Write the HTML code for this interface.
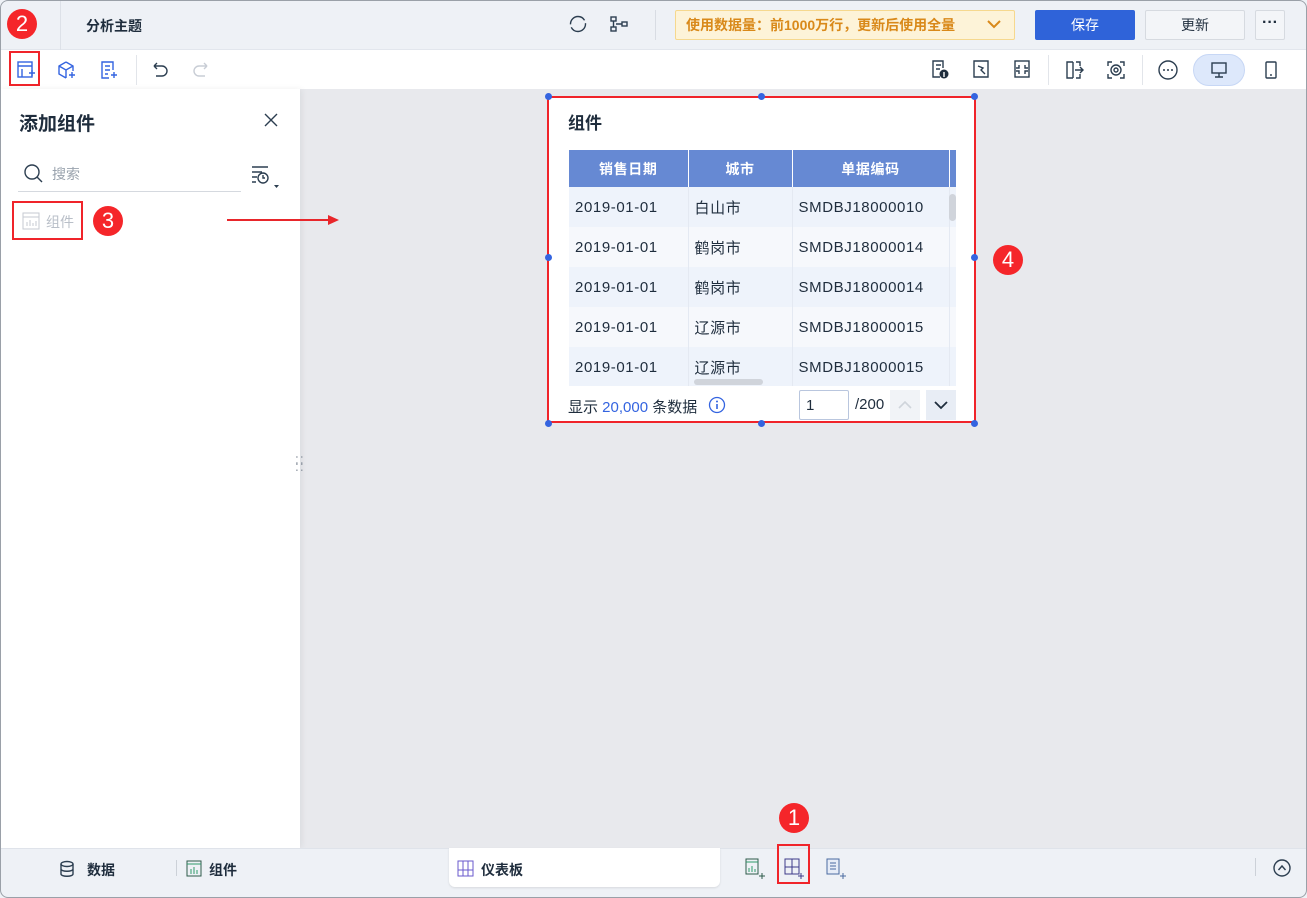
<!DOCTYPE html>
<html><head><meta charset="utf-8"><style>
*{box-sizing:border-box;margin:0;padding:0}
body{width:1307px;height:898px;overflow:hidden;font-family:"Liberation Sans","Noto Sans CJK SC",sans-serif;background:#fff;position:relative;color:#1f2d3d}
.abs{position:absolute}
.top{left:0;top:0;width:1307px;height:50px;background:#eef1f6;border-bottom:1px solid #e2e6ed}
.tb{left:0;top:50px;width:1307px;height:39px;background:#fff}
.main{left:0;top:89px;width:1307px;height:759px;background:#e8e9ed}
.left{left:0;top:89px;width:300px;height:759px;background:#fff;box-shadow:2px 0 6px rgba(0,0,0,.06)}
.bot{left:0;top:848px;width:1307px;height:50px;background:#eef1f6;border-top:1px solid #dfe3ea}
.badge{width:30px;height:30px;border-radius:50%;background:#f5262a;color:#fff;font-size:22px;text-align:center;line-height:30px}
.red{border:2px solid #f0242a}
.ic{stroke:#2c3e50;fill:none;stroke-width:1.4}
.dot{width:7px;height:7px;border-radius:50%;background:#3464e0}
table{border-collapse:collapse;font-size:15px;letter-spacing:.6px}
td,th{height:40px;border-right:1px solid #e4e9f2;padding-left:6px;text-align:left;font-weight:normal;white-space:nowrap}
th{height:37px;background:#6689d3;color:#fff;font-weight:bold;text-align:center;padding:0;border-right:1px solid #fff;font-size:14px}
tr:nth-child(even) td{background:#eef3fb}
tr:nth-child(odd) td{background:#f6f8fc}
</style></head><body>
<div class="abs top"></div>
<div class="abs" style="left:60px;top:0;width:1px;height:50px;background:#dde1e8"></div>
<div class="abs" style="left:86px;top:16px;font-size:14px;font-weight:bold">分析主题</div>
<svg class="abs" style="left:568px;top:14px" width="20" height="20"><circle cx="10" cy="10" r="7.5" class="ic" stroke-width="1.8" stroke-dasharray="20 3"/></svg>
<svg class="abs" style="left:609px;top:14px" width="20" height="20"><rect x="2" y="3" width="5" height="4" class="ic"/><rect x="2" y="13" width="5" height="4" class="ic"/><rect x="13" y="8" width="5" height="4" class="ic"/><path d="M4.5 7v6M7 10h6" class="ic"/></svg>
<div class="abs" style="left:655px;top:10px;width:1px;height:30px;background:#d8dce3"></div>
<div class="abs" style="left:675px;top:10px;width:340px;height:30px;background:#fdf3d8;border:1px solid #f6d88e;border-radius:2px;color:#d9891a;font-size:14px;font-weight:bold;line-height:28px;padding-left:10px">使用数据量：前1000万行，更新后使用全量</div>
<svg class="abs" style="left:986px;top:17px" width="16" height="14"><path d="M2 4l6 6 6-6" stroke="#d9891a" stroke-width="2" fill="none"/></svg>
<div class="abs" style="left:1035px;top:10px;width:100px;height:30px;background:#2f63d9;border-radius:2px;color:#fff;font-size:14px;text-align:center;line-height:30px">保存</div>
<div class="abs" style="left:1145px;top:10px;width:100px;height:30px;background:#f3f5f8;border:1px solid #d6dae0;border-radius:2px;font-size:14px;text-align:center;line-height:28px">更新</div>
<div class="abs" style="left:1255px;top:10px;width:30px;height:30px;background:#f3f5f8;border:1px solid #d6dae0;border-radius:2px;text-align:center;line-height:24px;font-weight:bold">···</div>

<div class="abs tb"></div>
<svg class="abs" style="left:15px;top:59px" width="22" height="22"><rect x="3" y="3" width="14" height="15" stroke="#3464e0" fill="none" stroke-width="1.4"/><path d="M3 7h14M7 10v8M14 14h6M17 11v6" stroke="#3464e0" stroke-width="1.4"/></svg>
<div class="abs red" style="left:9px;top:51px;width:31px;height:35px"></div>
<svg class="abs" style="left:57px;top:60px" width="20" height="20"><path d="M9 2l7 4v5M9 2L2 6v8l7 4M2 6l7 4 7-4M9 10v8" stroke="#3464e0" fill="none" stroke-width="1.4"/><path d="M12 15h6M15 12v6" stroke="#3464e0" stroke-width="1.4"/></svg>
<svg class="abs" style="left:99px;top:60px" width="20" height="20"><path d="M14 10V2H3v16h7M6 6h5M6 10h5M6 14h3M12 15h6M15 12v6" stroke="#3464e0" fill="none" stroke-width="1.4"/></svg>
<div class="abs" style="left:136px;top:55px;width:1px;height:30px;background:#e2e5ea"></div>
<svg class="abs" style="left:150px;top:60px" width="20" height="20"><path d="M4 6h8a5 5 0 010 10H6M4 6l3-3M4 6l3 3" class="ic"/></svg>
<svg class="abs" style="left:191px;top:60px" width="20" height="20"><path d="M16 6H8a5 5 0 000 10h6M16 6l-3-3M16 6l-3 3" stroke="#c8cdd5" fill="none" stroke-width="1.4"/></svg>
<svg class="abs" style="left:930px;top:59px" width="20" height="22"><path d="M13 9V2H3v16h7M6 6h5M6 10h4" class="ic"/><circle cx="14" cy="15" r="4.5" fill="#1f2d3d"/><path d="M14 13v5" stroke="#fff" stroke-width="1.4"/></svg>
<svg class="abs" style="left:971px;top:59px" width="20" height="22"><path d="M3 2h14v16H3z M7 7l5 2-2 2 4 4" class="ic"/></svg>
<svg class="abs" style="left:1012px;top:59px" width="20" height="22"><rect x="3" y="2" width="14" height="16" class="ic"/><path d="M7 6v3H4M13 6v3h3M7 15v-3H4M13 15v-3h3" class="ic"/></svg>
<div class="abs" style="left:1048px;top:55px;width:1px;height:30px;background:#e2e5ea"></div>
<svg class="abs" style="left:1064px;top:59px" width="22" height="22"><path d="M9 3H3v16h6M9 3v16M12 3h4v4M16 15v4h-4M11 11h8M16 8l3 3-3 3" class="ic"/></svg>
<svg class="abs" style="left:1105px;top:59px" width="22" height="22"><path d="M3 7V3h4M15 3h4v4M3 15v4h4M15 19h4v-4" class="ic"/><circle cx="11" cy="11" r="5" class="ic"/><circle cx="11" cy="11" r="2" class="ic"/></svg>
<div class="abs" style="left:1142px;top:55px;width:1px;height:30px;background:#e2e5ea"></div>
<svg class="abs" style="left:1157px;top:59px" width="22" height="22"><circle cx="11" cy="11" r="9" class="ic"/><circle cx="7" cy="11" r="1" fill="#2c3e50"/><circle cx="11" cy="11" r="1" fill="#2c3e50"/><circle cx="15" cy="11" r="1" fill="#2c3e50"/></svg>
<div class="abs" style="left:1193px;top:54px;width:52px;height:32px;border-radius:16px;background:#dde8fb;border:1px solid #c7d7f5"></div>
<svg class="abs" style="left:1209px;top:60px" width="20" height="20"><rect x="3" y="3" width="14" height="10" class="ic" stroke-width="1.6"/><path d="M10 13v4M6 17h8" class="ic" stroke-width="1.6"/></svg>
<svg class="abs" style="left:1261px;top:60px" width="20" height="20"><rect x="5" y="2" width="10" height="16" rx="1" class="ic" stroke-width="1.6"/><path d="M9 15h2" class="ic"/></svg>
<div class="abs badge" style="left:7px;top:9px">2</div>

<div class="abs main"></div>
<div class="abs left"></div>
<div class="abs" style="left:19px;top:109px;font-size:19px;font-weight:bold">添加组件</div>
<svg class="abs" style="left:262px;top:111px" width="18" height="18"><path d="M3 3l12 12M15 3L3 15" class="ic" stroke-width="1.6"/></svg>
<svg class="abs" style="left:23px;top:163px" width="22" height="22"><circle cx="9" cy="9" r="7" class="ic" stroke-width="1.7"/><path d="M14 14l5 5" class="ic" stroke-width="1.7"/></svg>
<div class="abs" style="left:52px;top:164px;font-size:14px;color:#9aa3ae">搜索</div>
<div class="abs" style="left:18px;top:191px;width:223px;height:1px;background:#d5d9df"></div>
<svg class="abs" style="left:250px;top:163px" width="32" height="30"><path d="M2 4h16M2 9h10M2 14h5M2 19h4" class="ic"/><circle cx="13" cy="15" r="5" class="ic"/><path d="M13 12v3h2" class="ic"/><path d="M24 22l2.5 3 2.5-3z" fill="#2c3e50"/></svg>
<div class="abs red" style="left:12px;top:201px;width:71px;height:39px"></div>
<svg class="abs" style="left:22px;top:212px" width="18" height="18"><rect x="1" y="1" width="16" height="16" stroke="#c5cad2" fill="none"/><path d="M1 5h16M5 14v-4M8 14v-6M11 14v-3M14 14v-5" stroke="#c5cad2"/></svg>
<div class="abs" style="left:46px;top:212px;font-size:14px;color:#b9bfc8">组件</div>
<div class="abs badge" style="left:93px;top:206px">3</div>
<div class="abs" style="left:227px;top:219px;width:105px;height:2px;background:#e8262b"></div>
<svg class="abs" style="left:328px;top:214px" width="12" height="12"><path d="M0 1l11 5-11 5z" fill="#e8262b"/></svg>
<div class="abs" style="left:295px;top:458px;font-size:12px;color:#8e96a1;line-height:6px;letter-spacing:1px">⁚⁚<br>⁚⁚</div>

<div class="abs" style="left:548px;top:96px;width:427px;height:327px;background:#fff"></div>
<div class="abs" style="left:568px;top:109px;font-size:17px;font-weight:bold">组件</div>
<div class="abs" style="left:569px;top:150px;width:387px;height:236px;overflow:hidden">
<table style="width:420px">
<tr><th style="width:119px">销售日期</th><th style="width:104px">城市</th><th style="width:157px">单据编码</th><th></th></tr>
<tr><td>2019-01-01</td><td>白山市</td><td>SMDBJ18000010</td><td></td></tr>
<tr><td>2019-01-01</td><td>鹤岗市</td><td>SMDBJ18000014</td><td></td></tr>
<tr><td>2019-01-01</td><td>鹤岗市</td><td>SMDBJ18000014</td><td></td></tr>
<tr><td>2019-01-01</td><td>辽源市</td><td>SMDBJ18000015</td><td></td></tr>
<tr><td>2019-01-01</td><td>辽源市</td><td>SMDBJ18000015</td><td></td></tr>
</table></div>
<div class="abs" style="left:949px;top:194px;width:7px;height:27px;border-radius:4px;background:#d0d4db"></div>
<div class="abs" style="left:694px;top:379px;width:69px;height:6px;border-radius:3px;background:#d0d4db"></div>
<div class="abs" style="left:568px;top:396px;font-size:15px">显示 <span style="color:#3464e0">20,000</span> 条数据</div>
<svg class="abs" style="left:708px;top:396px" width="18" height="18"><circle cx="9" cy="9" r="7.5" stroke="#3464e0" fill="none" stroke-width="1.3"/><path d="M9 8v5" stroke="#3464e0" stroke-width="1.6"/><circle cx="9" cy="5.5" r="1" fill="#3464e0"/></svg>
<div class="abs" style="left:799px;top:390px;width:50px;height:30px;border:1px solid #b9c6de;border-radius:2px;font-size:15px;padding:6px 6px">1</div>
<div class="abs" style="left:855px;top:396px;font-size:15px">/200</div>
<div class="abs" style="left:890px;top:390px;width:30px;height:30px;background:#f1f3f7"></div>
<svg class="abs" style="left:897px;top:398px" width="16" height="14"><path d="M2 10l6-6 6 6" stroke="#cfd4db" stroke-width="1.6" fill="none"/></svg>
<div class="abs" style="left:926px;top:390px;width:30px;height:30px;background:#e8edf5"></div>
<svg class="abs" style="left:933px;top:398px" width="16" height="14"><path d="M2 4l6 6 6-6" stroke="#1f2d3d" stroke-width="1.8" fill="none"/></svg>
<div class="abs red" style="left:547px;top:96px;width:429px;height:327px"></div>
<div class="abs dot" style="left:545px;top:93px"></div><div class="abs dot" style="left:758px;top:93px"></div><div class="abs dot" style="left:971px;top:93px"></div>
<div class="abs dot" style="left:545px;top:254px"></div><div class="abs dot" style="left:971px;top:254px"></div>
<div class="abs dot" style="left:545px;top:420px"></div><div class="abs dot" style="left:758px;top:420px"></div><div class="abs dot" style="left:971px;top:420px"></div>
<div class="abs badge" style="left:993px;top:245px">4</div>

<div class="abs bot"></div>
<svg class="abs" style="left:59px;top:860px" width="16" height="18"><ellipse cx="8" cy="4" rx="6" ry="2.5" class="ic"/><path d="M2 4v10c0 3 12 3 12 0V4M2 9c0 3 12 3 12 0" class="ic"/></svg>
<div class="abs" style="left:87px;top:860px;font-size:14px;font-weight:bold">数据</div>
<div class="abs" style="left:176px;top:860px;width:1px;height:16px;background:#ccd1d8"></div>
<svg class="abs" style="left:186px;top:860px" width="16" height="17"><rect x="1" y="1" width="14" height="15" stroke="#2d5a4a" fill="none"/><path d="M1 4h14M5 14v-5M8 14v-7M11 14v-4" stroke="#2d9a6a"/></svg>
<div class="abs" style="left:209px;top:860px;font-size:14px;font-weight:bold">组件</div>
<div class="abs" style="left:449px;top:848px;width:271px;height:39px;background:#fff;border-radius:0 0 6px 6px;box-shadow:0 1px 2px rgba(0,0,0,.1)"></div>
<svg class="abs" style="left:457px;top:860px" width="17" height="17"><rect x="1" y="1" width="15" height="15" stroke="#6a5acd" fill="none"/><path d="M6 1v15M11 1v15M1 10h15" stroke="#6a5acd"/></svg>
<div class="abs" style="left:481px;top:860px;font-size:14px;font-weight:bold">仪表板</div>
<svg class="abs" style="left:745px;top:858px" width="22" height="22"><rect x="1" y="1" width="12" height="15" stroke="#2d5a4a" fill="none"/><path d="M1 4h12M4 14v-4M7 14v-6M10 14v-3" stroke="#2d9a6a"/><path d="M14 18h6M17 15v6" stroke="#2d5a4a"/></svg>
<svg class="abs" style="left:784px;top:858px" width="22" height="22"><rect x="1" y="1" width="14" height="15" stroke="#3d3a8a" fill="none"/><path d="M8 1v15M1 9h14" stroke="#3d3a8a"/><path d="M14 18h6M17 15v6" stroke="#3d3a8a"/></svg>
<div class="abs red" style="left:777px;top:844px;width:33px;height:40px"></div>
<svg class="abs" style="left:826px;top:858px" width="22" height="22"><rect x="1" y="1" width="12" height="15" stroke="#4a6aa0" fill="#e6ecf7"/><path d="M4 5h6M4 8h6M4 11h6" stroke="#4a6aa0"/><path d="M14 18h6M17 15v6" stroke="#4a6aa0"/></svg>
<div class="abs badge" style="left:779px;top:803px">1</div>
<div class="abs" style="left:1255px;top:858px;width:1px;height:18px;background:#ccd1d8"></div>
<svg class="abs" style="left:1272px;top:858px" width="20" height="20"><circle cx="10" cy="10" r="8" class="ic" stroke-width="1.5"/><path d="M6.5 12l3.5-4 3.5 4" class="ic" stroke-width="1.5"/></svg>
<div class="abs" style="left:0;top:0;width:1307px;height:898px;border:1px solid #9aa0a8;border-radius:8px;pointer-events:none"></div>
</body></html>
